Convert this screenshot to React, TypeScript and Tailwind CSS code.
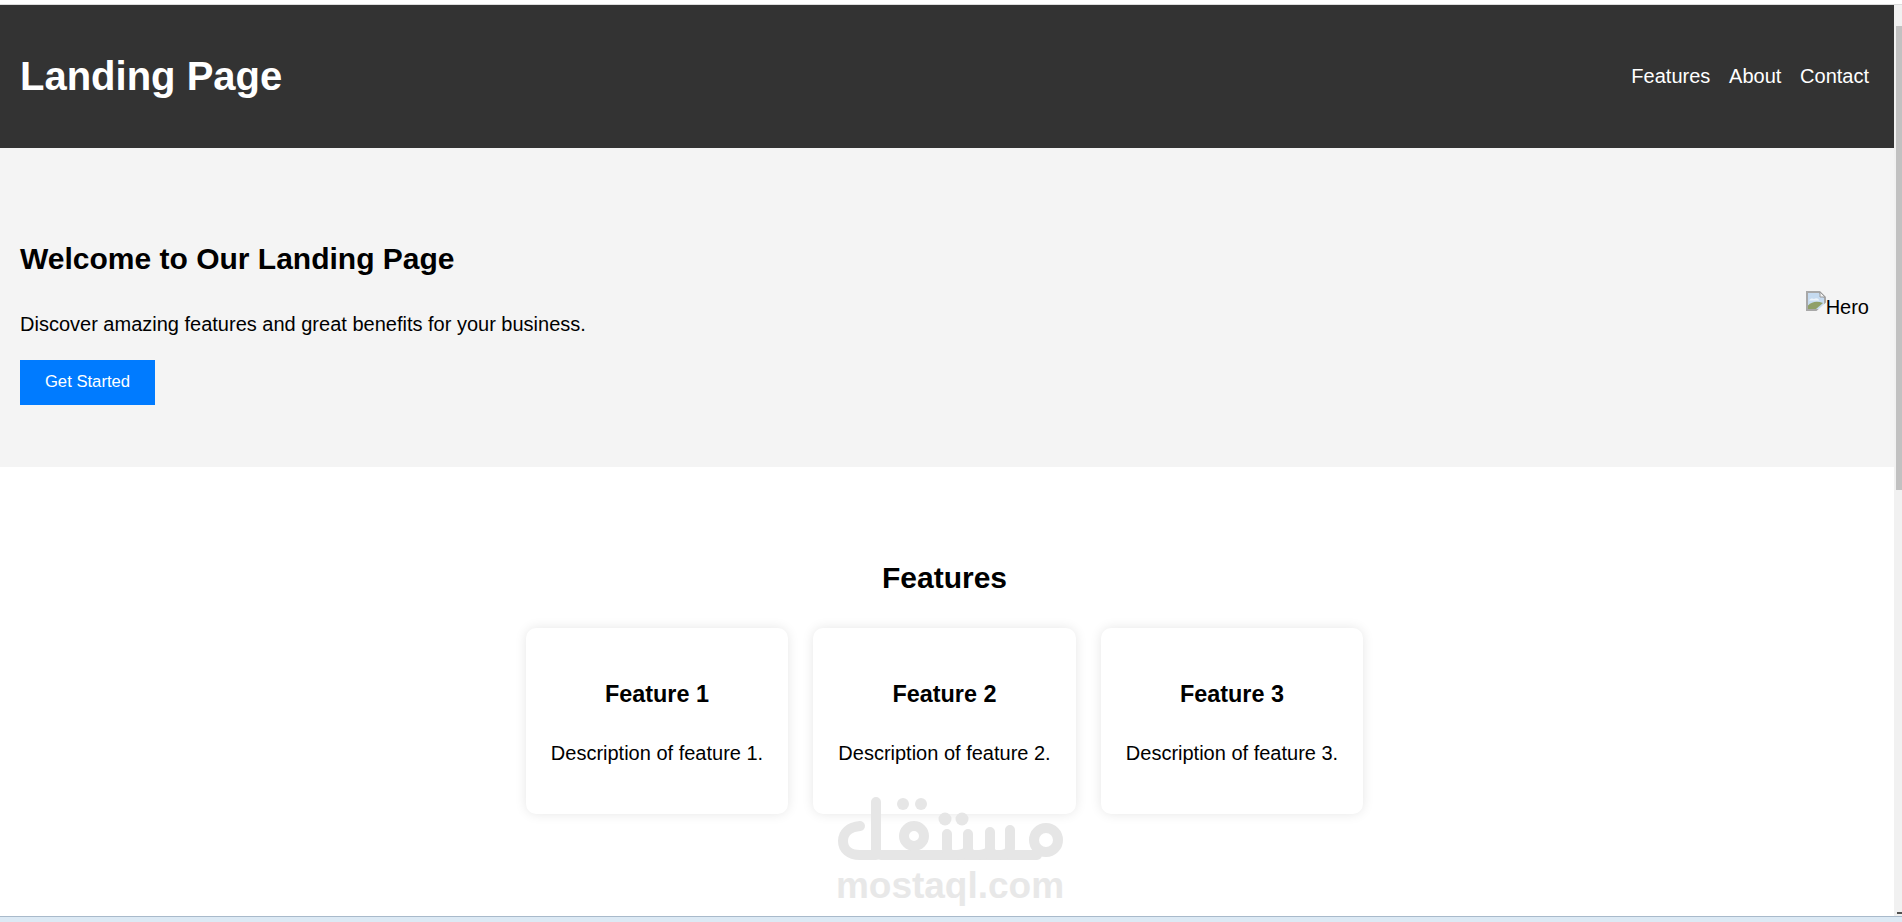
const sans = "font-['Liberation_Sans',Arial,sans-serif]";

function BrokenImage() {
  return (
    <svg width="20" height="20" viewBox="0 0 20 20" className="shrink-0">
      <path d="M0 0H14L20 6V20H0Z" fill="#a8a8a8" />
      <path d="M2 2H13L18 7V18H2Z" fill="#c6dbf0" />
      <path d="M14 1V6H19Z" fill="#f2f2f2" stroke="#9a9a9a" strokeWidth="1" />
      <path d="M3 9.500C4 7 7 7 8 8C10 6.500 13 7.500 13 9.500Z" fill="#eef4fa" />
      <path d="M2 18V14.500C6 10.500 11 10 17 12L10 18Z" fill="#8f9f68" />
      <path d="M20 11.500 10.500 20H20Z" fill="#f4f4f4" />
    </svg>
  );
}

function Watermark() {
  return (
    <div className="pointer-events-none absolute left-[830px] top-[790px] flex w-[240px] flex-col items-center">
      <svg width="240" height="78" viewBox="0 0 240 78" fill="none">
        <g stroke="#e6e6e6" strokeWidth="10" strokeLinecap="round" strokeLinejoin="round">
          <path d="M46 12V60Q46 65 51 65H207" />
          <path d="M46 65H30C19 65 13 59 13 51C13 43 19 37 30 36" />
          <circle cx="84" cy="46" r="10" />
          <path d="M117 44V58Q117 65 124 65Q138 65 138 58V44M138 58Q138 65 146 65Q160 65 160 58V42M160 58Q160 65 168 65Q180 65 180 58V40" />
          <circle cx="216" cy="50" r="12" />
        </g>
        <g fill="#e6e6e6">
          <circle cx="73" cy="14" r="6" />
          <circle cx="91" cy="14" r="6" />
          <circle cx="115" cy="29" r="6.500" />
          <circle cx="132" cy="29" r="6.500" />
        </g>
      </svg>
      <div className={`${sans} mt-[-3px] text-[37px] font-bold leading-[41px] text-[#e8e8e8]`}>mostaql.com</div>
    </div>
  );
}

function Card({ n }: { n: number }) {
  return (
    <div className="flex h-[186px] w-[262.5px] flex-col items-center rounded-[10px] bg-white pt-[53px] shadow-[0_0_12px_rgba(0,0,0,0.1)]">
      <h3 className="text-[23.4px] font-bold leading-[27px]">Feature {n}</h3>
      <p className="mt-[34px] text-[20px] leading-[23px]">Description of feature {n}.</p>
    </div>
  );
}

export default function App() {
  return (
    <div className={`${sans} relative flex h-[922px] w-full flex-col overflow-hidden bg-white text-black`}>
      <div className="h-[5px] shrink-0 border-b border-[#dcdcdc] bg-white" />
      <div className="flex min-h-0 flex-1">
        <main className="flex min-w-0 flex-1 flex-col">
          <header className="flex h-[143px] shrink-0 items-center justify-between bg-[#333333] pl-5 pr-[25px] text-white">
            <h1 className="mb-[2px] text-[40px] font-bold leading-[46px]">Landing Page</h1>
            <nav className="flex gap-[18.75px] text-[20px] leading-[23px]">
              <a>Features</a>
              <a>About</a>
              <a>Contact</a>
            </nav>
          </header>
          <section className="flex h-[319px] shrink-0 items-start justify-between bg-[#f4f4f4] pl-5 pr-[25px]">
            <div className="mt-[94px] flex flex-col items-start">
              <h2 className="text-[30px] font-bold leading-[34px]">Welcome to Our Landing Page</h2>
              <p className="mt-[37px] text-[20px] leading-[23px]">Discover amazing features and great benefits for your business.</p>
              <button className="mt-[24px] flex h-[45px] w-[135px] items-center justify-center bg-[#007bff] pb-[2px] text-[16.67px] text-white">Get Started</button>
            </div>
            <div className="mt-[143px] flex items-start">
              <BrokenImage />
              <span className="mt-[5px] text-[20px] leading-[23px]">Hero</span>
            </div>
          </section>
          <section className="flex flex-1 flex-col items-center pl-5 pr-[25px] pt-[94px]">
            <h2 className="text-[30px] font-bold leading-[34px]">Features</h2>
            <div className="mt-[33px] flex gap-[25px]">
              <Card n={1} />
              <Card n={2} />
              <Card n={3} />
            </div>
          </section>
        </main>
        <aside className="flex w-2 shrink-0 flex-col bg-[#f1f1f1]">
          <div className="h-[21px] shrink-0" />
          <div className="ml-[2px] h-[464px] bg-[#c1c1c1]" />
          <div className="flex-1" />
          <div className="mb-[2px] ml-[3px] h-[2px] w-[5px] bg-[#505050]" />
        </aside>
      </div>
      <div className="h-[6px] shrink-0 border-t border-[#a9bacb] bg-[#dce9f4]" />
      <Watermark />
    </div>
  );
}
